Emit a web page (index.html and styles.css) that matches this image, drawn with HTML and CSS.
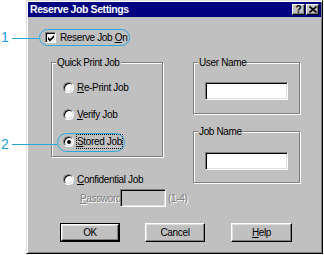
FILE: index.html
```html
<!DOCTYPE html>
<html>
<head>
<meta charset="utf-8">
<link rel="stylesheet" href="styles.css">
</head>
<body>
<div class="window">
  <div class="titlebar">
    <span class="title">Reserve Job Settings</span>
    <div class="tb-buttons">
      <span class="tbtn">?</span>
      <span class="tbtn close">
        <svg width="8" height="7" viewBox="0 0 8 7"><path d="M0.5 0.5 L7.5 6.5 M7.5 0.5 L0.5 6.5" stroke="#000" stroke-width="1.6"/></svg>
      </span>
    </div>
  </div>
  <div class="content">
    <div class="check-row">
      <span class="checkbox"><svg width="7" height="7" viewBox="0 0 7 7"><path d="M0 2 L2 4 L6 0 L6 2.6 L2 6.6 L0 4.6 Z" fill="#000"/></svg></span>
      <span>Reserve Job <u>O</u>n</span>
    </div>
    <div class="main">
      <div class="left">
        <div class="group qp">
          <span class="legend">Quick Print Job</span>
          <div class="radio-row"><span class="radio"></span><span><u>R</u>e-Print Job</span></div>
          <div class="radio-row"><span class="radio"></span><span><u>V</u>erify Job</span></div>
          <div class="radio-row"><span class="radio on"></span><span class="focus"><u>S</u>tored Job</span></div>
        </div>
        <div class="radio-row conf"><span class="radio"></span><span><u>C</u>onfidential Job</span></div>
        <div class="pw-row">
          <span class="dis pw-label"><u>P</u>assword</span>
          <span class="input off"></span>
          <span class="dis">(1-4)</span>
        </div>
      </div>
      <div class="right">
        <div class="group name">
          <span class="legend">User Name</span>
          <span class="input"></span>
        </div>
        <div class="group name jn">
          <span class="legend">Job Name</span>
          <span class="input"></span>
        </div>
      </div>
    </div>
    <div class="buttons">
      <span class="btn default"><span class="btn-inner">OK</span></span>
      <span class="btn cancel"><span class="btn-inner">Cancel</span></span>
      <span class="btn help"><span class="btn-inner"><u>H</u>elp</span></span>
    </div>
  </div>
</div>

<div class="anno-num n1">1</div>
<div class="anno-line l1"></div>
<div class="anno-pill p1"></div>
<div class="anno-num n2">2</div>
<div class="anno-line l2"></div>
<div class="anno-pill p2"></div>
</body>
</html>
```

FILE: styles.css
```css
html, body {
  margin: 0;
  padding: 0;
  background: #fff;
}
body {
  font-family: "Liberation Sans", Arial, sans-serif;
  font-size: 10px;
  letter-spacing: -0.35px;
  line-height: 13px;
  color: #000;
  width: 324px;
  height: 255px;
  overflow: hidden;
}
.window {
  margin-left: 26px;
  width: 297px;
  height: 254px;
  box-sizing: border-box;
  background: #c0c0c0;
  border: 1px solid;
  border-color: #dfdfdf #000 #000 #dfdfdf;
  box-shadow: inset 1px 1px 0 #fff, inset -1px -1px 0 #808080;
  padding: 1px;
}
.titlebar {
  height: 15px;
  background: #000080;
  display: flex;
  align-items: center;
  justify-content: space-between;
  padding: 0 2px;
}
.title {
  color: #fff;
  font-weight: bold;
  font-size: 10.5px;
  letter-spacing: -0.4px;
}
.tb-buttons {
  display: flex;
  gap: 1px;
}
.tbtn {
  width: 13px;
  height: 11px;
  box-sizing: border-box;
  background: #c0c0c0;
  border: 1px solid;
  border-color: #fff #000 #000 #fff;
  box-shadow: inset -1px -1px 0 #808080;
  display: flex;
  align-items: center;
  justify-content: center;
  font-weight: bold;
  font-size: 10px;
  line-height: 9px;
  letter-spacing: 0;
}
.tbtn svg { display: block; }
.content {
  padding: 14px 0 0 17px;
}
.check-row {
  display: flex;
  align-items: center;
  gap: 4px;
  height: 13px;
}
.checkbox {
  width: 11px;
  height: 11px;
  box-sizing: border-box;
  background: #fff;
  border: 1px solid;
  border-color: #808080 #fff #fff #808080;
  box-shadow: inset 1px 1px 0 #000, inset -1px -1px 0 #dfdfdf;
  display: flex;
  align-items: center;
  justify-content: center;
}
.checkbox svg { display: block; margin: 1px 0 0 1px; }
.main {
  display: flex;
  gap: 30px;
  margin: 18px 0 0 6px;
}
.left {
  width: 112px;
}
.group {
  position: relative;
  box-sizing: border-box;
  border: 1px solid #808080;
  box-shadow: 1px 1px 0 #fff, inset 1px 1px 0 #fff;
}
.legend {
  position: absolute;
  top: -7px;
  left: 4px;
  padding: 0 1px;
  background: #c0c0c0;
  line-height: 13px;
  white-space: nowrap;
}
.qp {
  width: 112px;
  height: 95px;
  padding: 18px 0 0 11px;
  display: flex;
  flex-direction: column;
  gap: 14px;
}
.radio-row {
  display: flex;
  align-items: center;
  gap: 3px;
  height: 13px;
  white-space: nowrap;
}
.radio {
  flex: none;
  width: 11px;
  height: 11px;
  box-sizing: border-box;
  border-radius: 50%;
  background: #fff;
  border: 1px solid;
  border-color: #808080 #fff #fff #808080;
  box-shadow: inset 1px 1px 0 #000, inset -1px -1px 0 #dfdfdf;
  display: flex;
  align-items: center;
  justify-content: center;
}
.radio.on::after {
  content: "";
  width: 4px;
  height: 4px;
  border-radius: 50%;
  background: #000;
}
.focus {
  outline: 1px dotted #000;
  outline-offset: 0;
}
.conf {
  margin: 16px 0 0 12px;
}
.pw-row {
  display: flex;
  align-items: center;
  margin: 3px 0 0 29px;
  white-space: nowrap;
}
.pw-label {
  width: 40px;
  flex: none;
}
.dis {
  color: #808080;
  text-shadow: 1px 1px 0 #fff;
}
.input {
  display: block;
  box-sizing: border-box;
  height: 18px;
  background: #fff;
  border: 1px solid;
  border-color: #808080 #fff #fff #808080;
  box-shadow: inset 1px 1px 0 #000, inset -1px -1px 0 #dfdfdf;
}
.input.off {
  flex: none;
  width: 46px;
  background: #c0c0c0;
  margin-right: 2px;
}
.right {
  display: flex;
  flex-direction: column;
  gap: 17px;
}
.name {
  width: 107px;
  height: 52px;
  padding: 19px 0 0 11px;
}
.jn {
  padding-top: 20px;
}
.name .input {
  width: 83px;
}
.buttons {
  display: flex;
  margin: 16px 0 0 15px;
}
.btn {
  box-sizing: border-box;
  height: 19px;
  width: 60px;
  display: flex;
}
.btn-inner {
  flex: 1;
  box-sizing: border-box;
  border: 1px solid;
  border-color: #fff #000 #000 #fff;
  box-shadow: inset -1px -1px 0 #808080, inset 1px 1px 0 #dfdfdf;
  display: flex;
  align-items: center;
  justify-content: center;
}
.btn.default {
  border: 1px solid #000;
}
.cancel { margin-left: 25px; }
.help { margin-left: 26px; width: 61px; }

.anno-num {
  position: absolute;
  font-family: "Liberation Sans", Arial, sans-serif;
  font-size: 14px;
  line-height: 14px;
  letter-spacing: 0;
  color: #1e9fd8;
}
.n1 { left: 1px; top: 30px; }
.n2 { left: 1px; top: 137px; }
.anno-line {
  position: absolute;
  height: 1px;
  background: #2aa8dc;
}
.l1 { left: 12px; top: 38px; width: 27px; }
.l2 { left: 12px; top: 144px; width: 45px; }
.anno-pill {
  position: absolute;
  box-sizing: border-box;
  border: 1px solid #2aa8dc;
  border-radius: 10px;
}
.p1 { left: 39px; top: 29px; width: 91px; height: 17px; }
.p2 { left: 57px; top: 133px; width: 68px; height: 19px; }
```
